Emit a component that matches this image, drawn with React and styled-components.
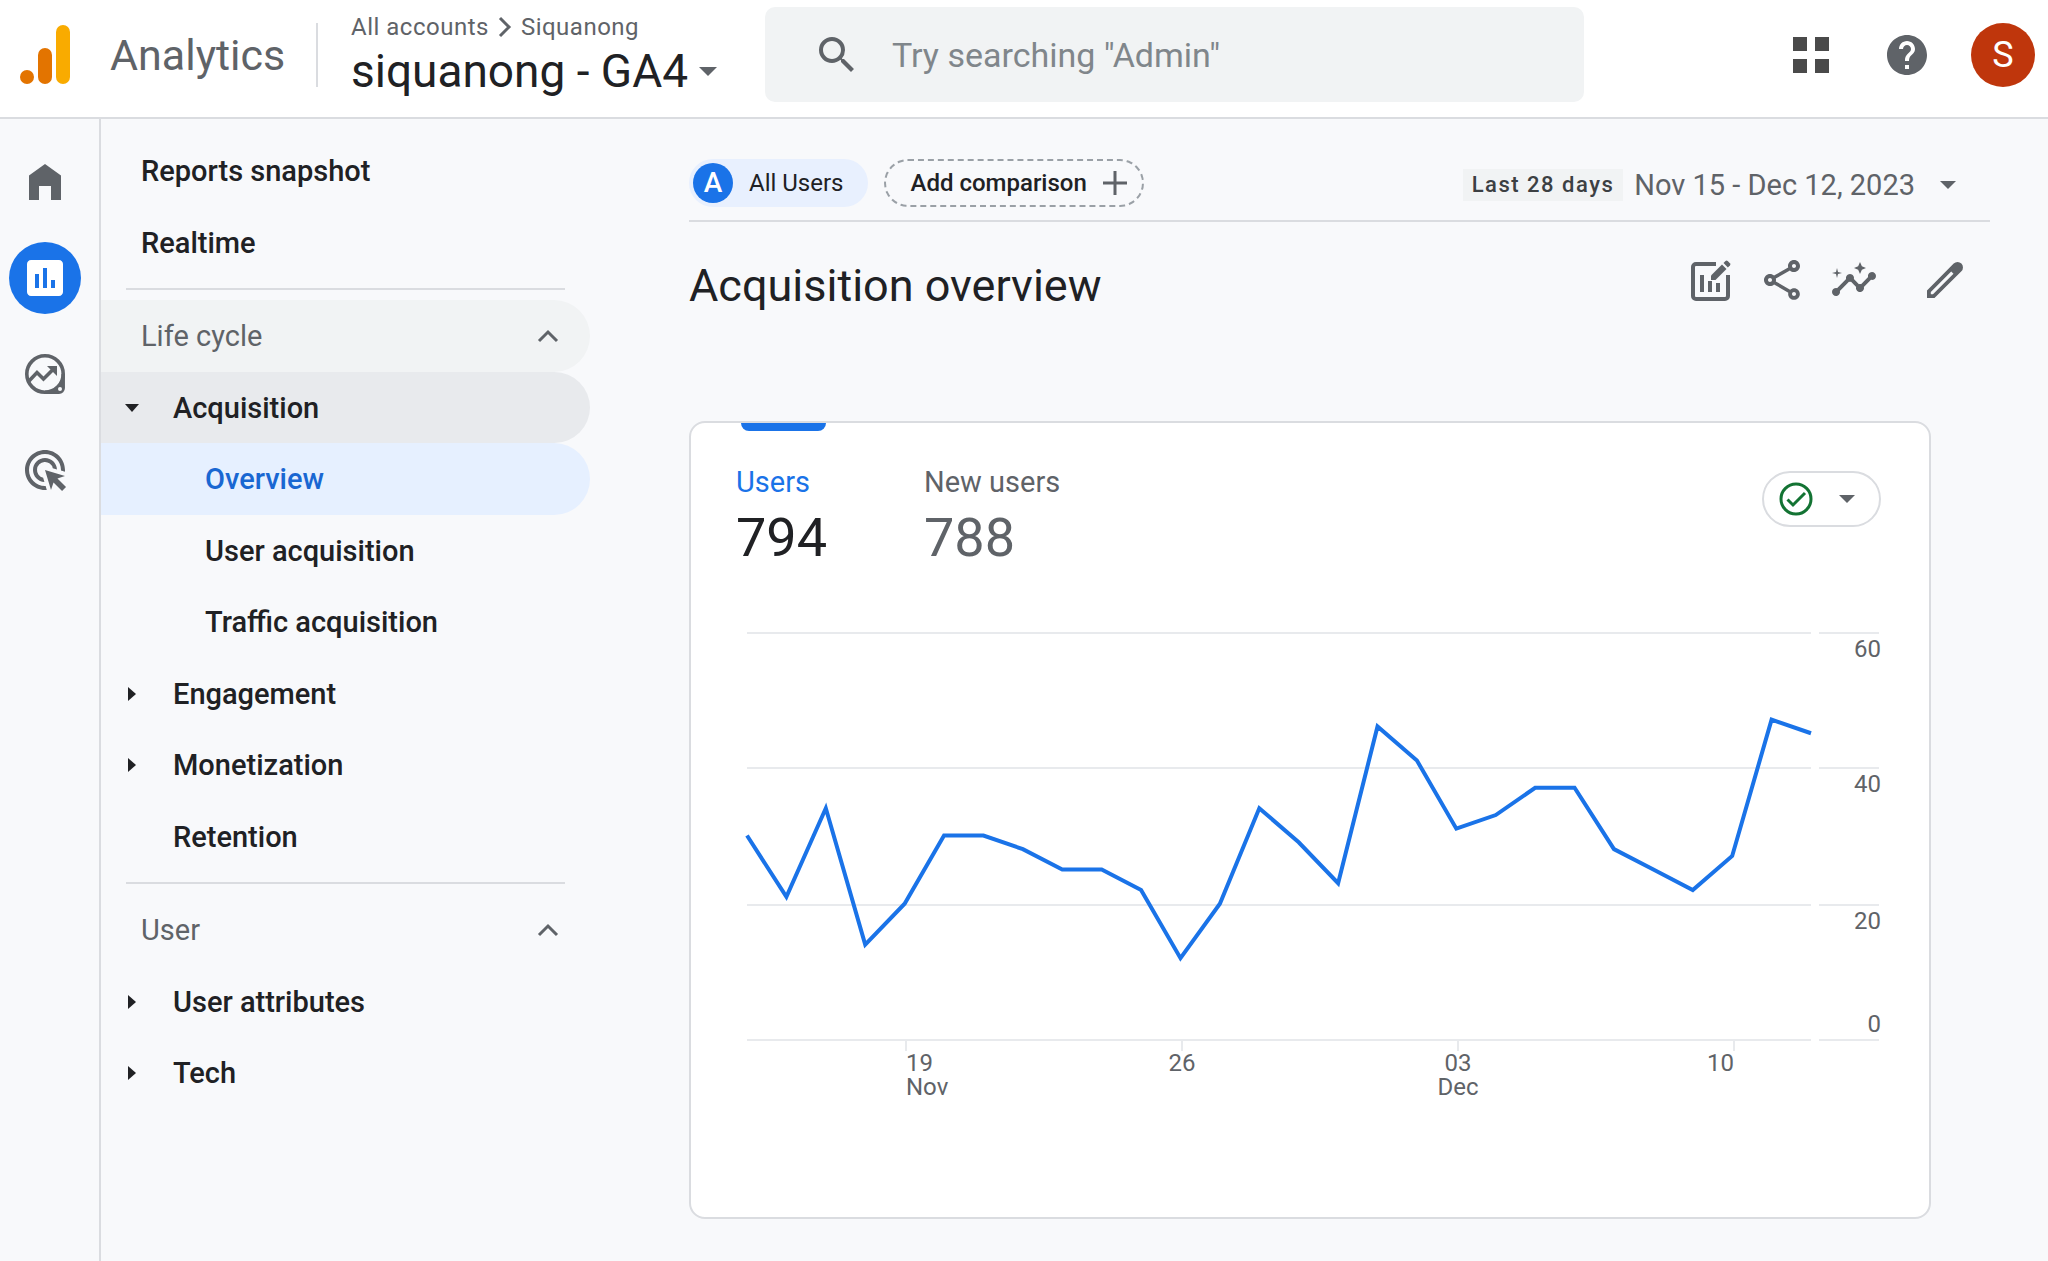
import React, { Component } from 'react';
import styled, { createGlobalStyle } from 'styled-components';
import { MdAdsClick, MdAssessment, MdHelp, MdInsights, MdOutlineShare, MdSearch } from 'react-icons/md';

const GlobalStyle = createGlobalStyle`
    * {
        box-sizing: border-box;
    }

    body {
        margin: 0;
        background: #f8f9fb;
        color: #202124;
        font-family: Roboto, 'Liberation Sans', sans-serif;
    }

    button, input {
        font: inherit;
        color: inherit;
        border: 0;
        padding: 0;
        background: none;
    }

    button {
        cursor: pointer;
    }

    a {
        color: inherit;
        text-decoration: none;
    }

    svg {
        display: block;
        flex-shrink: 0;
    }
`;

const Page = styled.div`
    display: flex;
    flex-direction: column;
    min-height: 100vh;
`;

const Header = styled.header`
    display: flex;
    align-items: center;
    padding: 7px 13px 15px 20px;
    border-bottom: 2px solid #dadce0;
    background: #fff;
`;

const Brand = styled.a`
    display: flex;
    align-items: center;
    gap: 40px;
    flex: 0 0 298px;
    height: 64px;
    border-right: 2px solid #dadce0;
    font-size: 43px;
    line-height: 56px;
    color: #5f6368;
`;

const Property = styled.div`
    flex: 0 0 447px;
    padding-left: 33px;
`;

const Breadcrumb = styled.nav`
    display: flex;
    align-items: center;
    gap: 8px;
    font-size: 24px;
    line-height: 32px;
    letter-spacing: 0.5px;
    color: #5f6368;
`;

const PropertyButton = styled.button`
    display: flex;
    align-items: center;
    gap: 8px;
    font-size: 46px;
    line-height: 56px;
    white-space: nowrap;

    svg {
        color: #5f6368;
    }
`;

const SearchBox = styled.label`
    display: flex;
    align-items: center;
    gap: 31px;
    flex: 0 1 819px;
    height: 95px;
    padding: 0 48px;
    border-radius: 10px;
    background: #f1f3f4;
    color: #5f6368;
`;

const SearchInput = styled.input`
    flex: 1;
    min-width: 0;
    font-size: 34px;
    line-height: 40px;
    outline: none;

    &::placeholder {
        color: #80868b;
        opacity: 1;
    }
`;

const HeaderActions = styled.div`
    display: flex;
    gap: 32px;
    margin-left: auto;
`;

const RoundButton = styled.button`
    display: flex;
    align-items: center;
    justify-content: center;
    width: 64px;
    height: 64px;
    border-radius: 50%;
    font-size: 36px;
    line-height: 44px;
    background: ${props => props.$fill || 'transparent'};
    color: ${props => props.$color || '#5f6368'};
`;

const Body = styled.div`
    display: flex;
    flex: 1;
`;

const Rail = styled.nav`
    display: flex;
    flex-direction: column;
    gap: 24px;
    flex: 0 0 101px;
    padding: 27px 0 0 9px;
    border-right: 2px solid #dadce0;
`;

const RailLink = styled.a`
    display: flex;
    align-items: center;
    justify-content: center;
    width: 72px;
    height: 72px;
    border-radius: 50%;
    background: ${props => props.$active ? '#1a73e8' : 'transparent'};
    color: ${props => props.$active ? '#fff' : '#5f6368'};
`;

const SideNav = styled.nav`
    flex: 0 0 489px;
    padding-top: 16px;
`;

const NavGroup = styled.div`
    display: grid;
    grid-auto-rows: 72px 71px;
`;

const NavDivider = styled.hr`
    height: 2px;
    margin: 10px 25px;
    border: 0;
    background: #dadce0;
`;

const indents = [40, 15, 104];

const NavLink = styled.a`
    display: flex;
    align-items: center;
    gap: 25px;
    padding-left: ${props => indents[props.$depth]}px;
    border-radius: 0 36px 36px 0;
    font-size: 29px;
    line-height: 36px;
    font-weight: 500;
    background: ${props => props.$fill || 'transparent'};
    color: ${props => props.$color || '#202124'};
`;

const NavSection = styled.button`
    display: flex;
    align-items: center;
    justify-content: space-between;
    padding: 0 30px 0 40px;
    border-radius: 0 36px 36px 0;
    font-size: 29px;
    line-height: 36px;
    background: ${props => props.$fill || 'transparent'};
    color: #5f6368;
`;

const ArrowSlot = styled.span`
    display: flex;
    justify-content: center;
    width: 32px;
`;

const Main = styled.main`
    flex: 1;
    min-width: 0;
    padding: 40px 58px 42px 99px;
`;

const Toolbar = styled.div`
    display: flex;
    align-items: center;
    gap: 16px;
    padding-bottom: 13px;
    border-bottom: 2px solid #dadce0;
    font-size: 24px;
    line-height: 28px;
`;

const AudienceChip = styled.button`
    display: flex;
    align-items: center;
    gap: 16px;
    height: 48px;
    padding: 0 25px 0 4px;
    border-radius: 24px;
    background: #e8f0fe;
`;

const ChipLetter = styled.span`
    width: 40px;
    height: 40px;
    border-radius: 50%;
    background: #1a73e8;
    color: #fff;
    font-size: 28px;
    line-height: 40px;
    font-weight: 500;
`;

const CompareButton = styled.button`
    display: flex;
    align-items: center;
    gap: 16px;
    height: 48px;
    padding: 0 15px 0 24px;
    border: 2px dashed #9aa0a6;
    border-radius: 24px;
    font-weight: 500;
`;

const DateButton = styled.button`
    display: flex;
    align-items: center;
    margin-left: auto;
    padding: 4px 32px 0 0;
    font-size: 29px;
    line-height: 32px;
    color: #5f6368;
`;

const DatePreset = styled.span`
    margin-right: 11px;
    padding: 0 9px;
    background: #f1f3f4;
    color: #3c4043;
    font-size: 22px;
    font-weight: 500;
    letter-spacing: 1.5px;
`;

const DateRange = styled.span`
    margin-right: 23px;
`;

const TitleRow = styled.div`
    display: flex;
    align-items: flex-start;
    justify-content: space-between;
    padding: 34px 21px 0 0;
`;

const Title = styled.h1`
    margin: 0;
    font-size: 45px;
    line-height: 60px;
    font-weight: 400;
`;

const Tools = styled.div`
    display: flex;
    gap: 24px;
    color: #5f6368;

    & > :last-child {
        margin-left: 19px;
    }
`;

const Card = styled.section`
    margin: 105px 59px 0 0;
    padding: 41px 48px 117px 45px;
    border: 2px solid #dadce0;
    border-radius: 16px;
    background: #fff;
`;

const CardHead = styled.div`
    display: flex;
    align-items: flex-start;
    justify-content: space-between;
`;

const Metrics = styled.div`
    display: flex;
    gap: 93px;
`;

const Metric = styled.button`
    position: relative;
    display: flex;
    flex-direction: column;
    align-items: flex-start;
    gap: 6px;
    min-width: 95px;
    color: ${props => props.$active ? '#202124' : '#5f6368'};

    /* marker hanging from the top edge of the card */
    &::before {
        content: '';
        display: ${props => props.$active ? 'block' : 'none'};
        position: absolute;
        top: -41px;
        left: 5px;
        right: 5px;
        height: 8px;
        border-radius: 0 0 8px 8px;
        background: #1a73e8;
    }
`;

const MetricName = styled.span`
    font-size: 29px;
    line-height: 36px;
    color: ${props => props.$active ? '#1a73e8' : '#5f6368'};
`;

const MetricValue = styled.span`
    font-size: 54px;
    line-height: 64px;
`;

const StatusButton = styled.button`
    display: flex;
    align-items: center;
    gap: 23px;
    height: 56px;
    margin-top: 7px;
    padding: 0 22px 0 14px;
    border: 2px solid #dadce0;
    border-radius: 28px;
    color: #5f6368;
`;

const ChartSvg = styled.svg`
    width: 100%;
    height: auto;
    margin-top: 30px;

    text {
        font-size: 24px;
        fill: #5f6368;
    }
`;

const Logo = () => (
    <svg width='50' height='60' viewBox='0 0 50 60'>
        <circle cx='7' cy='52' r='7' fill='#e37400' />
        <rect x='18' y='23' width='14' height='36' rx='7' fill='#e37400' />
        <rect x='36' y='0' width='14' height='59' rx='7' fill='#f9ab00' />
    </svg>
);

const Caret = ({ wide }) => (
    <svg width={wide ? 24 : 20} height='24' viewBox={wide ? '0 0 24 24' : '2 0 20 24'} fill='currentColor'>
        <path d={wide ? 'M3 8h18l-9 9z' : 'M4 8h16l-8 8z'} />
    </svg>
);

const DownArrow = () => (
    <svg width='14' height='8' viewBox='0 0 14 8' fill='currentColor'><path d='M0 0h14L7 8z' /></svg>
);

const RightArrow = () => (
    <svg width='8' height='14' viewBox='0 0 8 14' fill='currentColor'><path d='M0 0v14l8-7z' /></svg>
);

const ChevronUp = () => (
    <svg width='24' height='16' viewBox='0 0 24 16' fill='none' stroke='currentColor' strokeWidth='3'>
        <path d='M3 13l9-9 9 9' />
    </svg>
);

const ChevronRight = () => (
    <svg width='16' height='24' viewBox='0 0 16 24' fill='none' stroke='currentColor' strokeWidth='3'>
        <path d='M3 3l9 9-9 9' />
    </svg>
);

const AppsIcon = () => (
    <svg width='36' height='36' viewBox='0 0 36 36' fill='#4a4a4a'>
        <path d='M0 0h14v14H0zM22 0h14v14H22zM0 22h14v14H0zM22 22h14v14H22z' />
    </svg>
);

const HomeIcon = () => (
    <svg width='32' height='36' viewBox='0 0 32 36' fill='currentColor'>
        <path d='M16 0l16 11.500V36H22V22H10v14H0V11.500z' />
    </svg>
);

const ExploreIcon = () => (
    <svg width='40' height='40' viewBox='0 0 40 40' fill='none' stroke='currentColor'>
        <path d='M38.200 20V34a4.200 4.200 0 0 1-4.200 4.200H20' strokeWidth='3.500' />
        <path d='M37 24v13H24q9-3 13-13z' fill='currentColor' stroke='none' />
        <circle cx='20' cy='20' r='18.200' strokeWidth='3.600' />
        <path d='M4 27l8-8.500 6.500 6.500L29 14.500' strokeWidth='3.600' />
        <path d='M22 12h10v10z' fill='currentColor' stroke='none' />
        <circle cx='35' cy='35' r='2' fill='#f8f9fb' stroke='none' />
    </svg>
);

const CustomizeIcon = () => (
    <svg width='48' height='48' viewBox='0 0 48 48' fill='none' stroke='currentColor'>
        <path d='M30 8H10a3 3 0 0 0-3 3v29a3 3 0 0 0 3 3h29a3 3 0 0 0 3-3V19' strokeWidth='4' />
        <path d='M16 19v17M24 25v11M32 27v9' strokeWidth='4' />
        <path d='M25 19.500L36 8.500l4.500 4.500-11 11H25z' fill='currentColor' stroke='none' />
        <path d='M37.500 7l2-2a1.600 1.600 0 0 1 2.200 0l2.200 2.200a1.600 1.600 0 0 1 0 2.200l-2 2z' fill='currentColor' stroke='none' />
    </svg>
);

const PencilIcon = () => (
    <svg width='48' height='48' viewBox='0 0 48 48'>
        <path
            fill='currentColor'
            fillRule='evenodd'
            d='M6 34.500L32.700 7.600a5.500 5.500 0 0 1 7.700 0 5.500 5.500 0 0 1 0 7.700L13.500 42H6zM9.800 36v2.300H12L32.500 17.800 30.200 15.500z'
        />
    </svg>
);

const PlusIcon = () => (
    <svg width='24' height='24' viewBox='0 0 24 24' stroke='#5f6368' strokeWidth='3'>
        <path d='M12 0v24M0 12h24' />
    </svg>
);

const CheckIcon = () => (
    <svg width='36' height='36' viewBox='0 0 36 36' fill='none' stroke='#137333' strokeWidth='3'>
        <circle cx='18' cy='18' r='15' />
        <path d='M9.500 18.500l5.500 5.500L27 12' />
    </svg>
);

const values = [
    30, 21, 34, 14, 20, 30, 30, 28, 25, 25, 22, 12, 20, 34,
    29, 23, 46, 41, 31, 33, 37, 37, 28, 25, 22, 27, 47, 45,
];

const gridLines = [
    { value: 60, y: 33, labelY: 57 },
    { value: 40, y: 168, labelY: 192 },
    { value: 20, y: 305, labelY: 329 },
    { value: 0, y: 440, labelY: 432 },
];

const ticks = [
    { x: 170, day: '19', month: 'Nov', anchor: 'start' },
    { x: 446, day: '26', anchor: 'middle' },
    { x: 722, day: '03', month: 'Dec', anchor: 'middle' },
    { x: 998, day: '10', anchor: 'end' },
];

const Chart = () => {
    const step = (1075 - 11) / (values.length - 1);
    const points = values
        .map((value, i) => `${11 + i * step},${440 - value * (409 / 60)}`)
        .join(' ');

    return (
        <ChartSvg viewBox='0 0 1145 500' role='img' aria-label='Users per day'>
            {gridLines.map(line => (
                <g key={line.value}>
                    <path d={`M11 ${line.y}H1075M1083 ${line.y}H1143`} stroke='#e8eaed' strokeWidth='2' />
                    <text x='1145' y={line.labelY} textAnchor='end'>{line.value}</text>
                </g>
            ))}
            {ticks.map(tick => (
                <g key={tick.day}>
                    <path d={`M${tick.x} 440v11`} stroke='#e8eaed' strokeWidth='2' />
                    <text x={tick.x} y='471' textAnchor={tick.anchor}>{tick.day}</text>
                    {tick.month && <text x={tick.x} y='495' textAnchor={tick.anchor}>{tick.month}</text>}
                </g>
            ))}
            <polyline points={points} fill='none' stroke='#1a73e8' strokeWidth='4' />
        </ChartSvg>
    );
};

export default class App extends Component {
    constructor(props) {
        super(props);

        this.state = {
            search: '',
            metric: 'Users',
        };

        this.handleSearchChange = this.handleSearchChange.bind(this);
    }

    handleSearchChange(event) {
        this.setState({ search: event.target.value });
    }

    renderMetric(name, value) {
        const active = this.state.metric === name;

        return (
            <Metric $active={active} aria-pressed={active} onClick={() => this.setState({ metric: name })}>
                <MetricName $active={active}>{name}</MetricName>
                <MetricValue>{value}</MetricValue>
            </Metric>
        );
    }

    renderParent(name) {
        return (
            <NavLink href='#' $depth={1}>
                <ArrowSlot><RightArrow /></ArrowSlot>
                {name}
            </NavLink>
        );
    }

    render() {
        return (
            <Page>
                <GlobalStyle />
                <Header>
                    <Brand href='#'>
                        <Logo />
                        Analytics
                    </Brand>
                    <Property>
                        <Breadcrumb>
                            <a href='#'>All accounts</a>
                            <ChevronRight />
                            <a href='#'>Siquanong</a>
                        </Breadcrumb>
                        <PropertyButton>
                            siquanong - GA4
                            <Caret wide />
                        </PropertyButton>
                    </Property>
                    <SearchBox>
                        <MdSearch size={48} />
                        <SearchInput
                            type='text'
                            name='search'
                            aria-label='Search'
                            placeholder='Try searching "Admin"'
                            value={this.state.search}
                            onChange={this.handleSearchChange}
                        />
                    </SearchBox>
                    <HeaderActions>
                        <RoundButton aria-label='Apps'><AppsIcon /></RoundButton>
                        <RoundButton aria-label='Help'><MdHelp size={48} /></RoundButton>
                        <RoundButton $fill='#bf360c' $color='#fff'>S</RoundButton>
                    </HeaderActions>
                </Header>
                <Body>
                    <Rail>
                        <RailLink href='#' aria-label='Home'><HomeIcon /></RailLink>
                        <RailLink href='#' aria-label='Reports' $active><MdAssessment size={48} /></RailLink>
                        <RailLink href='#' aria-label='Explore'><ExploreIcon /></RailLink>
                        <RailLink href='#' aria-label='Advertising'><MdAdsClick size={48} /></RailLink>
                    </Rail>
                    <SideNav>
                        <NavGroup>
                            <NavLink href='#' $depth={0}>Reports snapshot</NavLink>
                            <NavLink href='#' $depth={0}>Realtime</NavLink>
                        </NavGroup>
                        <NavDivider />
                        <NavGroup>
                            <NavSection $fill='#f1f3f4'>
                                Life cycle
                                <ChevronUp />
                            </NavSection>
                            <NavLink href='#' $depth={1} $fill='#e8eaed'>
                                <ArrowSlot><DownArrow /></ArrowSlot>
                                Acquisition
                            </NavLink>
                            <NavLink href='#' $depth={2} $fill='#e6f0ff' $color='#1967d2'>Overview</NavLink>
                            <NavLink href='#' $depth={2}>User acquisition</NavLink>
                            <NavLink href='#' $depth={2}>Traffic acquisition</NavLink>
                            {this.renderParent('Engagement')}
                            {this.renderParent('Monetization')}
                            <NavLink href='#' $depth={1}>
                                <ArrowSlot />
                                Retention
                            </NavLink>
                        </NavGroup>
                        <NavDivider />
                        <NavGroup>
                            <NavSection>
                                User
                                <ChevronUp />
                            </NavSection>
                            {this.renderParent('User attributes')}
                            {this.renderParent('Tech')}
                        </NavGroup>
                    </SideNav>
                    <Main>
                        <Toolbar>
                            <AudienceChip>
                                <ChipLetter>A</ChipLetter>
                                All Users
                            </AudienceChip>
                            <CompareButton>
                                Add comparison
                                <PlusIcon />
                            </CompareButton>
                            <DateButton>
                                <DatePreset>Last 28 days</DatePreset>
                                <DateRange>Nov 15 - Dec 12, 2023</DateRange>
                                <Caret />
                            </DateButton>
                        </Toolbar>
                        <TitleRow>
                            <Title>Acquisition overview</Title>
                            <Tools>
                                <button aria-label='Customize report'><CustomizeIcon /></button>
                                <button aria-label='Share'><MdOutlineShare size={48} /></button>
                                <button aria-label='Insights'><MdInsights size={48} /></button>
                                <button aria-label='Edit'><PencilIcon /></button>
                            </Tools>
                        </TitleRow>
                        <Card>
                            <CardHead>
                                <Metrics>
                                    {this.renderMetric('Users', 794)}
                                    {this.renderMetric('New users', 788)}
                                </Metrics>
                                <StatusButton aria-label='Data quality'>
                                    <CheckIcon />
                                    <Caret />
                                </StatusButton>
                            </CardHead>
                            <Chart />
                        </Card>
                    </Main>
                </Body>
            </Page>
        );
    }
}
